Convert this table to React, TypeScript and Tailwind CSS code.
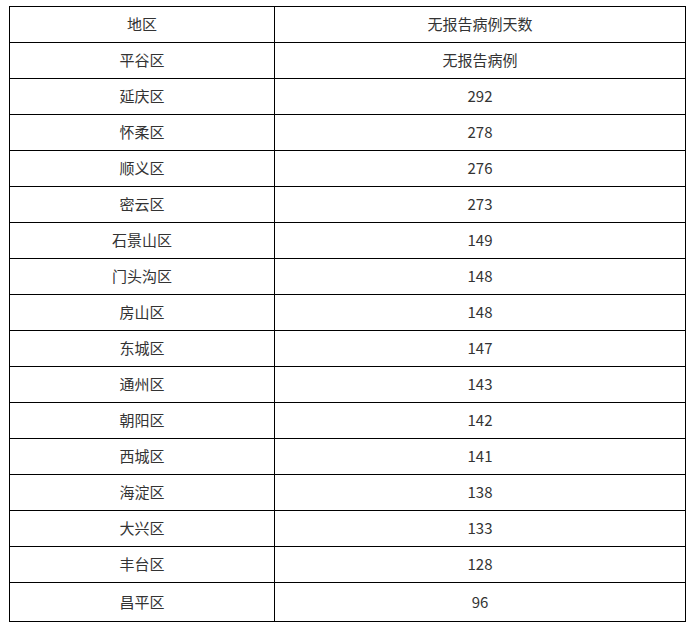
import React from "react";

const rows: [string, string][] = [
  ["平谷区", "无报告病例"],
  ["延庆区", "292"],
  ["怀柔区", "278"],
  ["顺义区", "276"],
  ["密云区", "273"],
  ["石景山区", "149"],
  ["门头沟区", "148"],
  ["房山区", "148"],
  ["东城区", "147"],
  ["通州区", "143"],
  ["朝阳区", "142"],
  ["西城区", "141"],
  ["海淀区", "138"],
  ["大兴区", "133"],
  ["丰台区", "128"],
  ["昌平区", "96"],
];

export default function App() {
  const all: [string, string][] = [["地区", "无报告病例天数"], ...rows];
  return (
    <div
      className="w-[698px] h-[634px] bg-white pt-[6px] pl-[9px] text-[15px] text-[#333333]"
      style={{ fontFamily: '"Noto Sans CJK SC", "Noto Sans", sans-serif' }}
    >
      <div className="grid grid-cols-[265px_411px] w-[677px] border-l border-t border-black">
        {all.map(([a, b], i) => {
          const h = i === all.length - 1 ? "h-[39px]" : "h-[36px]";
          return (
            <React.Fragment key={i}>
              <div className={`${h} border-r border-b border-black flex items-center justify-center`}>
                {a}
              </div>
              <div className={`${h} border-r border-b border-black flex items-center justify-center`}>
                {b}
              </div>
            </React.Fragment>
          );
        })}
      </div>
    </div>
  );
}
